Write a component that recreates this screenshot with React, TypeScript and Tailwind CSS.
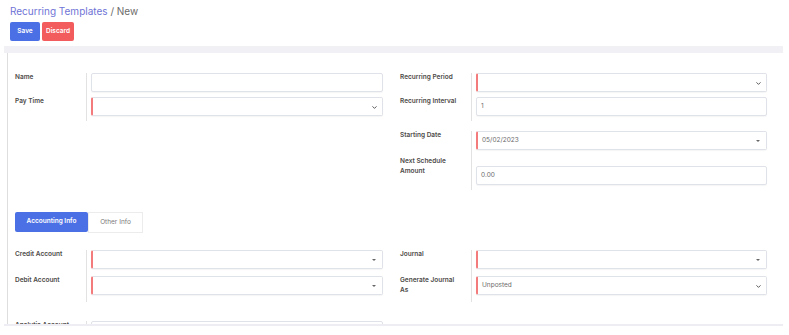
import { ChevronDown } from 'lucide-react';

type Field = {
  label: string;
  value?: string;
  required?: boolean;
  kind?: 'text' | 'select' | 'combo';
  offset?: string;
};

const font = { fontFamily: 'Inter, "Noto Sans", sans-serif' };

function Control({ value, required, kind = 'text' }: Field) {
  return (
    <div
      className={`relative flex h-[19px] items-center rounded-[2px] border border-[#dfe2e8] bg-white pl-[4px] text-[6.5px] text-[#6b6b6b] shadow-[0_1px_1px_rgba(0,0,0,0.04)] ${
        required ? 'border-l-2 border-l-[#f47b7b]' : ''
      }`}
    >
      <span>{value}</span>
      {kind === 'select' && (
        <ChevronDown className="absolute right-[4px] top-[6px] h-[7px] w-[7px] text-[#444]" strokeWidth={3} />
      )}
      {kind === 'combo' && (
        <span className="absolute right-[6px] top-[8px] h-0 w-0 border-x-[2px] border-t-[2px] border-x-transparent border-t-[#666]" />
      )}
    </div>
  );
}

/** Labels on the left, controls on the right of a thin divider. */
function Group({ fields, gap = 'pb-[5px]' }: { fields: Field[]; gap?: string }) {
  return (
    <div className="flex flex-col">
      {fields.map((f) => (
        <div key={f.label} className="flex">
          <div
            className={`w-[71px] shrink-0 whitespace-pre-line pr-[6px] text-[6.5px] font-semibold leading-[9.5px] text-[#4d4a48] ${
              f.offset ? 'pt-[2px]' : ''
            }`}
          >
            {f.label}
          </div>
          <div className={`flex-1 border-l border-[#e2e2e2] pl-[4px] ${gap} ${f.offset ?? ''}`}>
            <Control {...f} />
          </div>
        </div>
      ))}
    </div>
  );
}

export default function App() {
  return (
    <div className="h-[335px] w-[789px] overflow-hidden bg-white" style={font}>
      {/* Breadcrumb + actions */}
      <div className="px-[10px] pt-[4px]">
        <div className="text-[10px] leading-[14px]">
          <span className="text-[#6f74d6]">Recurring Templates</span>
          <span className="text-[#6b6b6b]"> / New</span>
        </div>
        <div className="mt-[4px] flex gap-[2px]">
          <button className="h-[19px] w-[30px] rounded-[2px] bg-[#4b6fe4] text-[6.5px] font-semibold text-white">
            Save
          </button>
          <button className="h-[19px] w-[32px] rounded-[2px] bg-[#f25c5c] text-[6.5px] font-semibold text-white">
            Discard
          </button>
        </div>
      </div>

      <div className="mx-[4px] mt-[5px] h-[7px] w-[779px] bg-[#f1f1f5]" />

      {/* Form sheet */}
      <div className="ml-[7px] h-[271px] w-[776px] overflow-hidden border-l border-[#dedede] pl-[7px] pr-[16px] pt-[20px]">
        <div className="grid grid-cols-[368px_367px] gap-x-[17px]">
          <Group
            fields={[
              { label: 'Name' },
              { label: 'Pay Time', required: true, kind: 'select' },
            ]}
          />
          <div className="flex flex-col gap-[10px]">
            <Group
              fields={[
                { label: 'Recurring Period', required: true, kind: 'select' },
                { label: 'Recurring Interval', value: '1' },
              ]}
            />
            <Group
              fields={[
                { label: 'Starting Date', required: true, kind: 'combo', value: '05/02/2023' },
                { label: 'Next Schedule\nAmount', value: '0.00', offset: 'pt-[11px]' },
              ]}
            />
          </div>
        </div>

        {/* Tabs */}
        <div className="mt-[22px] flex">
          <div className="flex h-[20px] w-[73px] items-center justify-center rounded-[2px] bg-[#4b6fe4] text-[6.5px] font-semibold text-white">
            Accounting Info
          </div>
          <div className="flex h-[21px] w-[55px] items-center justify-center border border-[#ececec] text-[6.5px] text-[#7a7a7a]">
            Other Info
          </div>
        </div>

        <div className="mt-[17px] grid grid-cols-[368px_367px] gap-x-[17px]">
          <Group
            gap="pb-[7px]"
            fields={[
              { label: 'Credit Account', required: true, kind: 'combo' },
              { label: 'Debit Account', required: true, kind: 'combo' },
            ]}
          />
          <Group
            gap="pb-[7px]"
            fields={[
              { label: 'Journal', required: true, kind: 'combo' },
              { label: 'Generate Journal\nAs', required: true, kind: 'select', value: 'Unposted' },
            ]}
          />
        </div>

        <div className="mt-[19px] grid grid-cols-[368px_367px] gap-x-[17px]">
          <Group fields={[{ label: 'Analytic Account' }]} />
        </div>
      </div>

      <div className="mx-[4px] h-[2px] w-[779px] bg-[#ededf3]" />
    </div>
  );
}
